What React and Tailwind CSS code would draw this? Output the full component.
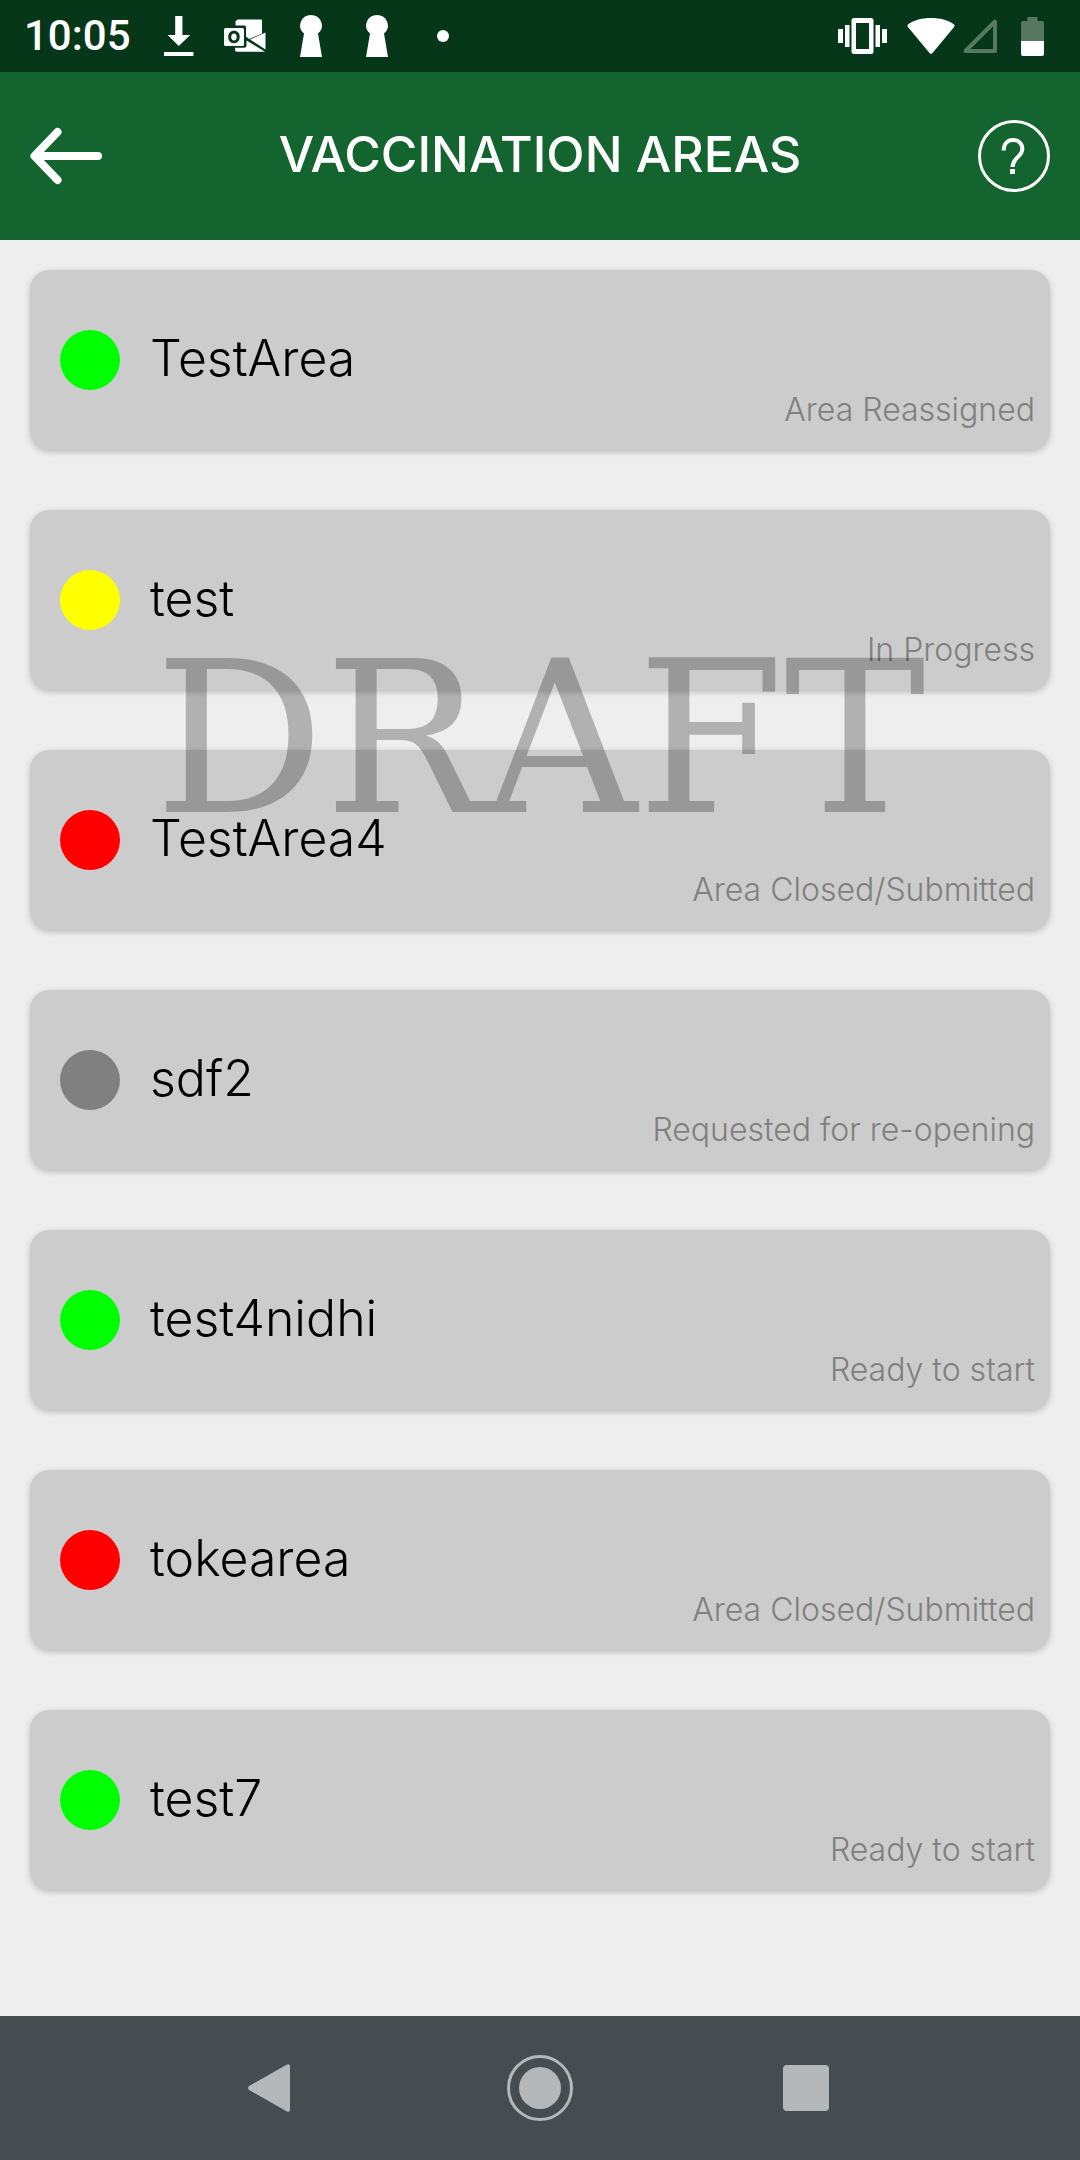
import React from "react";

const AREAS = [
  { name: "TestArea", status: "Area Reassigned", dot: "bg-[#00ff00]" },
  { name: "test", status: "In Progress", dot: "bg-[#ffff00]" },
  { name: "TestArea4", status: "Area Closed/Submitted", dot: "bg-[#ff0000]" },
  { name: "sdf2", status: "Requested for re-opening", dot: "bg-[#808080]" },
  { name: "test4nidhi", status: "Ready to start", dot: "bg-[#00ff00]" },
  { name: "tokearea", status: "Area Closed/Submitted", dot: "bg-[#ff0000]" },
  { name: "test7", status: "Ready to start", dot: "bg-[#00ff00]" },
];

function DownloadIcon() {
  return (
    <svg width="30" height="40" viewBox="0 0 30 40" fill="currentColor" aria-hidden="true">
      <path d="M11.2 0h7.2v19h7.8L14.8 30 3.6 19h7.6z" />
      <path d="M0 36h29.4v4H0z" />
    </svg>
  );
}

function OutlookIcon() {
  return (
    <svg width="42" height="34" viewBox="0 0 42 34" fill="currentColor" aria-hidden="true">
      <path d="M13 1.2Q13 .5 14 .5h23q1 0 1 1v13L25 20l-3-2.500V8q0-1.500-1.500-1.500H11.500V2z" />
      <path d="M41.500 13.500v17L26 20.500z" />
      <path d="M22.500 21.500 41 32.800H13q-2 0-2-2v-2h9q2.500 0 2.500-2.500z" />
      <path
        fillRule="evenodd"
        d="M1.500 9h17q1.500 0 1.500 1.500v15q0 1.500-1.500 1.500h-17Q0 27 0 25.500v-15Q0 9 1.500 9zM10 11.800c-3.600 0-5.800 2.600-5.800 6.200s2.200 6.200 5.700 6.200 5.800-2.500 5.800-6.200-2.100-6.200-5.700-6.200zm0 2.700c1.700 0 2.700 1.400 2.700 3.500s-1 3.500-2.700 3.500-2.800-1.400-2.800-3.500 1.100-3.500 2.800-3.500z"
      />
    </svg>
  );
}

function KeyholeIcon() {
  return (
    <svg width="22" height="42" viewBox="0 0 22 42" fill="currentColor" aria-hidden="true">
      <path d="M11 0a10.800 10.500 0 0 1 7 18.500L22 42H0l4-23.500A10.800 10.500 0 0 1 11 0z" />
    </svg>
  );
}

function VibrateIcon() {
  return (
    <svg width="49" height="36" viewBox="0 0 49 36" fill="currentColor" aria-hidden="true">
      <path d="M0 11h5v14H0zM7 7h4.500v22H7zM37.500 7H42v22h-4.500zM44 11h5v14h-5z" />
      <path
        fillRule="evenodd"
        d="M16 0h17q2.500 0 2.500 2.500v31Q35.500 36 33 36H16q-2.500 0-2.500-2.500v-31Q13.500 0 16 0zm2 5v26h13V5z"
      />
    </svg>
  );
}

function WifiIcon() {
  return (
    <svg width="48" height="36" viewBox="0 0 48 36" fill="currentColor" aria-hidden="true">
      <path d="M1.200 6.200C7 2 15 0 24 0s17 2 22.800 6.200q1.400 1.100.3 2.700L25.500 35q-1.500 1.700-3 0L.9 8.900Q-.2 7.300 1.200 6.200z" />
    </svg>
  );
}

function SignalIcon() {
  return (
    <svg width="34" height="34" viewBox="0 0 34 34" fill="none" stroke="currentColor" strokeWidth="4" strokeLinejoin="round" aria-hidden="true">
      <path d="M32 2.500V32H2.500z" />
    </svg>
  );
}

function BatteryIcon() {
  return (
    <svg width="23" height="39" viewBox="0 0 23 39" fill="currentColor" aria-hidden="true">
      <path opacity=".32" d="M6.500 0h10v4H21q2 0 2 2v18H0V6q0-2 2-2h4.500z" />
      <path d="M0 24h23v13q0 2-2 2H2q-2 0-2-2z" />
    </svg>
  );
}

function StatusBar() {
  return (
    <div className="flex h-[72px] items-center bg-[#073719] pr-9 text-white">
      <time className="w-[146px] pl-6 font-['Roboto',sans-serif] text-[42px] leading-[72px] font-medium">10:05</time>
      <div className="flex items-center">
        <span className="flex w-[66px] justify-center"><DownloadIcon /></span>
        <span className="flex w-[66px] justify-center"><OutlookIcon /></span>
        <span className="flex w-[66px] justify-center"><KeyholeIcon /></span>
        <span className="flex w-[66px] justify-center"><KeyholeIcon /></span>
        <span className="flex w-[66px] justify-center"><span className="size-3 rounded-full bg-white" /></span>
      </div>
      <div className="ml-auto flex items-center">
        <VibrateIcon />
        <span className="ml-5"><WifiIcon /></span>
        <span className="ml-2 text-[#557962]"><SignalIcon /></span>
        <span className="ml-6"><BatteryIcon /></span>
      </div>
    </div>
  );
}

function Header() {
  return (
    <header className="flex items-center justify-between bg-[#146430] px-[30px] py-12 text-white">
      <button type="button" aria-label="Back" className="size-[72px]">
        <svg width="72" height="72" viewBox="0 0 72 72" fill="none" stroke="currentColor" strokeWidth="8" strokeLinecap="round" strokeLinejoin="round" aria-hidden="true">
          <path d="M27.500 12 4.500 36l23 24M5 36h63" />
        </svg>
      </button>
      <h1 className="pb-1 text-[50px] leading-[68px] font-medium">VACCINATION AREAS</h1>
      <button type="button" aria-label="Help" className="size-[72px]">
        <svg width="72" height="72" viewBox="0 0 72 72" fill="none" stroke="currentColor" aria-hidden="true">
          <circle cx="36" cy="36" r="34.500" strokeWidth="3" />
          <path strokeWidth="4" d="M25.700 30.500C25.700 24 29.500 20 35 20s9.300 3.500 9.300 9c0 8-9.800 8.500-9.800 18" />
          <path fill="currentColor" stroke="none" d="M32 49h5v5h-5z" />
        </svg>
      </button>
    </header>
  );
}

function AreaCard({ name, status, dot }) {
  return (
    <li>
      <button
        type="button"
        className="flex min-h-[180px] w-full items-center rounded-[20px] bg-[#cccccc] pr-[15px] pl-[30px] text-left font-light shadow-[0_2px_6px_rgba(0,0,0,0.22)]"
      >
        <span className={`size-[60px] shrink-0 rounded-full ${dot}`} />
        <span className="ml-[30px] flex-1 pb-1 text-[50px] leading-[64px] text-black">{name}</span>
        <span className="self-end pb-5 text-[32px] leading-[40px] text-[#808080]">{status}</span>
      </button>
    </li>
  );
}

function NavBar() {
  return (
    <nav className="flex h-36 items-center justify-center bg-[#454d50] text-[#b4b8b9]">
      <button type="button" aria-label="Back" className="flex w-[266px] justify-center">
        <svg width="52" height="66" viewBox="0 0 52 66" fill="currentColor" aria-hidden="true">
          <path d="M1 31 38.500 9.800Q42 8 42 11.500v43q0 3.500-3.500 1.700L1 35q-2-2 0-4z" />
        </svg>
      </button>
      <button type="button" aria-label="Home" className="flex w-[266px] justify-center">
        <svg width="66" height="66" viewBox="0 0 66 66" fill="none" aria-hidden="true">
          <circle cx="33" cy="33" r="31.500" stroke="currentColor" strokeWidth="3" />
          <circle cx="33" cy="33" r="21" fill="currentColor" />
        </svg>
      </button>
      <button type="button" aria-label="Recent apps" className="flex w-[266px] justify-center">
        <span className="size-[46px] rounded bg-[#b4b8b9]" />
      </button>
    </nav>
  );
}

export default function App() {
  return (
    <div className="flex min-h-screen flex-col bg-[#eeeeee] font-['Inter',sans-serif]">
      <StatusBar />
      <Header />
      <main className="relative flex-1 px-[30px] pt-[30px] pb-[30px]">
        <ul className="flex flex-col gap-[60px]">
          {AREAS.map((area) => (
            <AreaCard key={area.name} {...area} />
          ))}
        </ul>
        <p className="pointer-events-none absolute inset-x-0 top-[374px] text-center font-['DejaVu_Serif',serif] text-[212px] leading-[250px] text-black opacity-25 [font-kerning:none]">
          DRAFT
        </p>
      </main>
      <NavBar />
    </div>
  );
}
